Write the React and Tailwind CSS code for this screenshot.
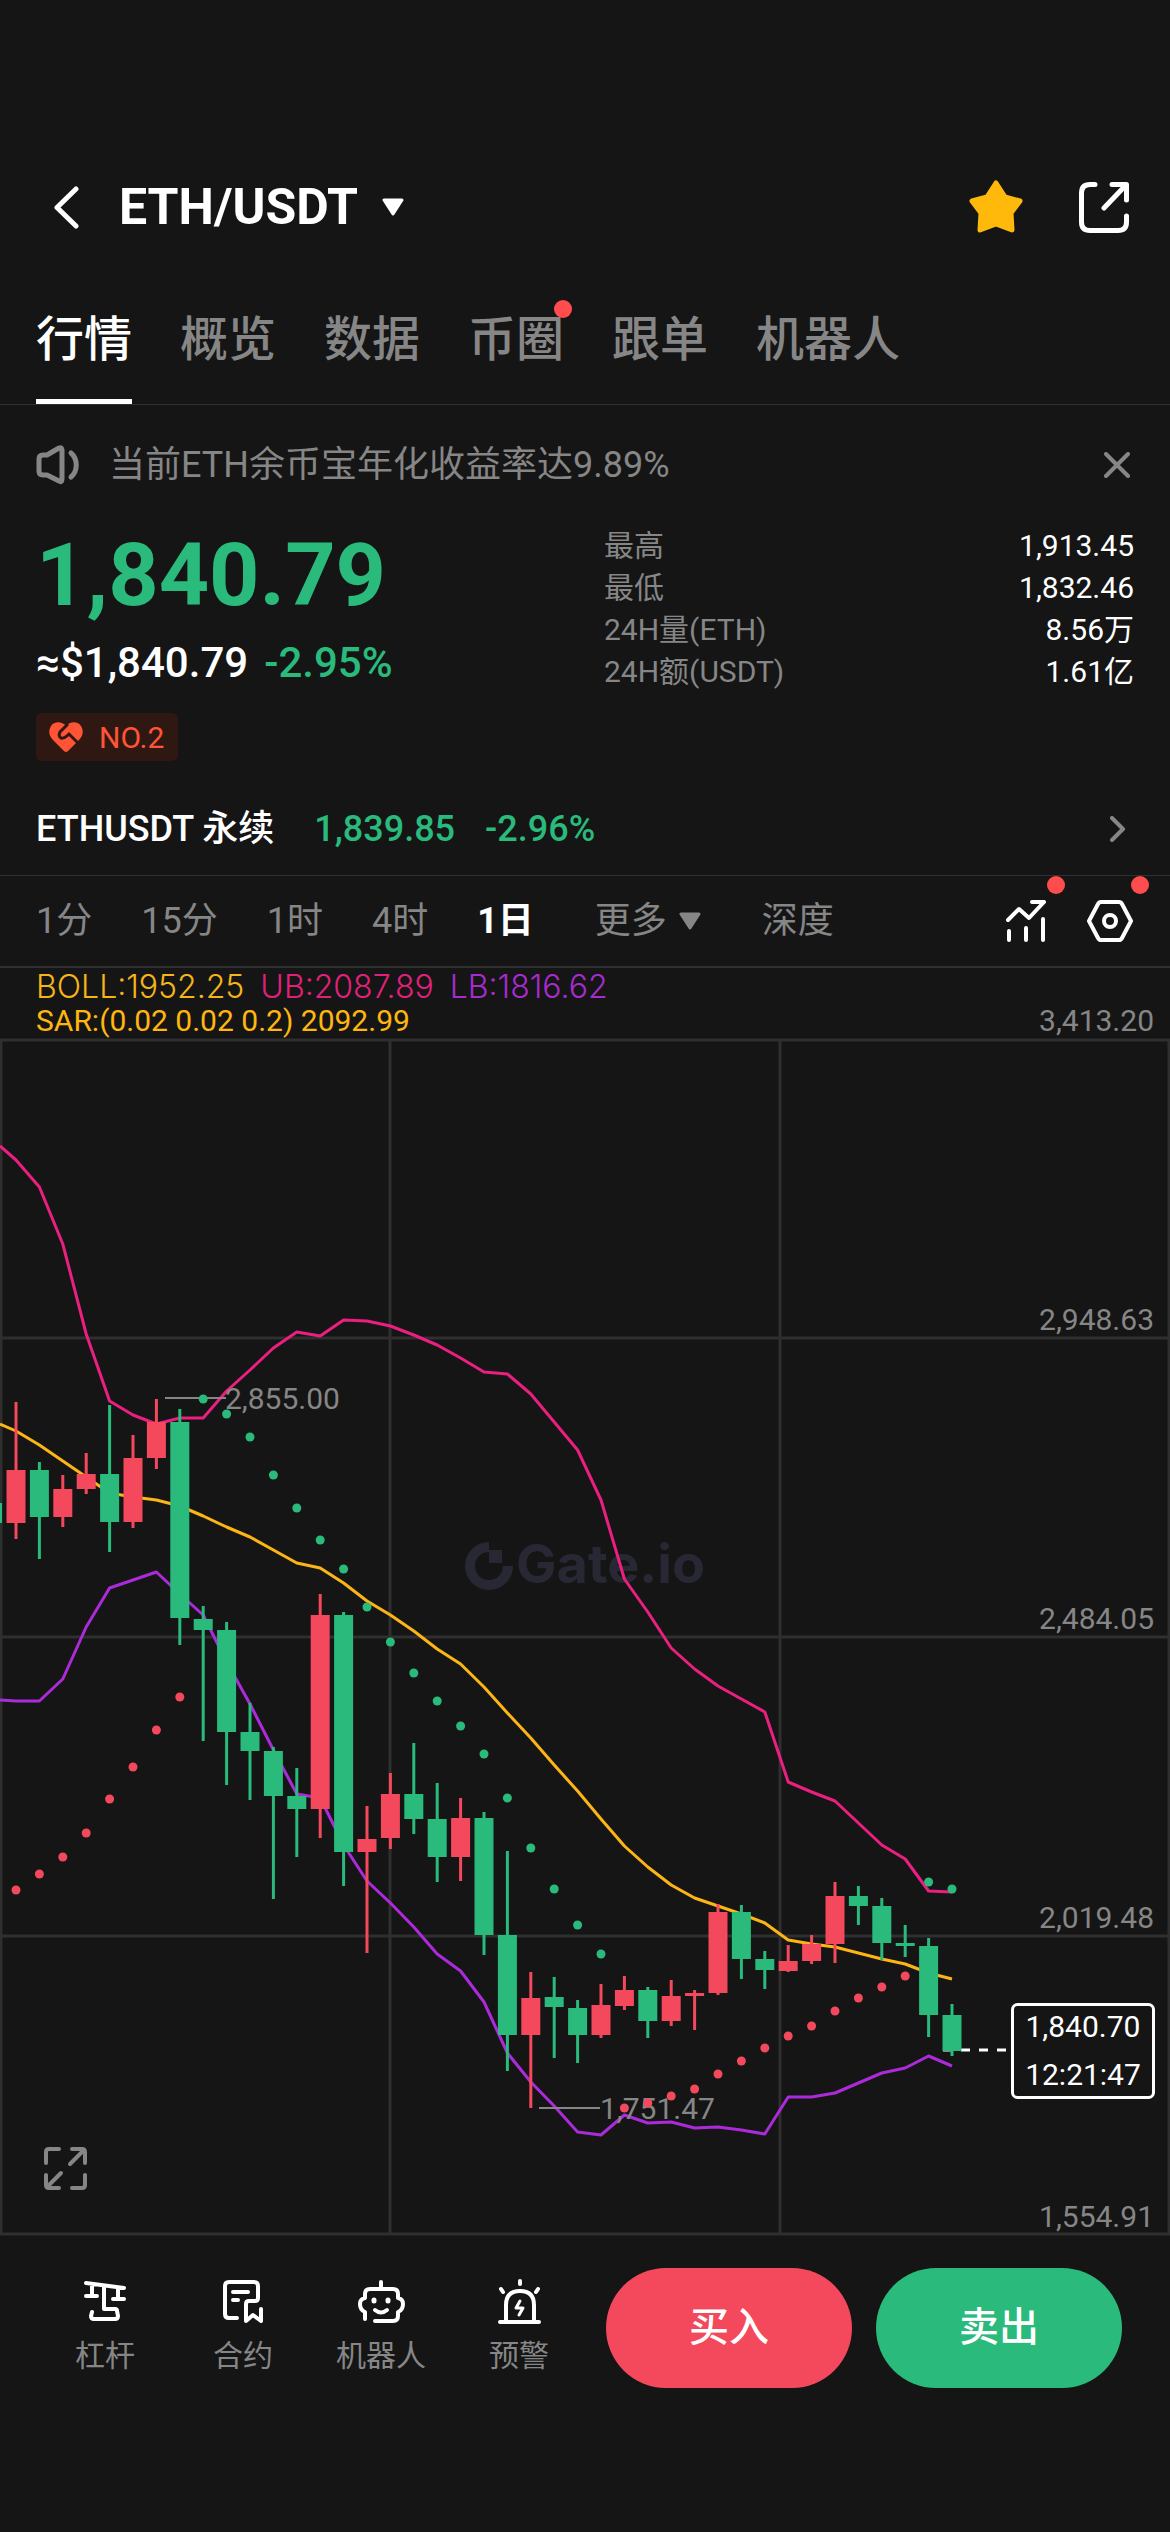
import clsx from 'clsx';

const tabs = [
  { label: '行情', active: true },
  { label: '概览' },
  { label: '数据' },
  { label: '币圈', dot: true },
  { label: '跟单' },
  { label: '机器人' },
];

const stats = [
  ['最高', '1,913.45'],
  ['最低', '1,832.46'],
  ['24H量(ETH)', '8.56万'],
  ['24H额(USDT)', '1.61亿'],
];

// --- Chart data, one entry per day, in chart units from the top grid line ---
// [color, high, body top, body bottom, low]
const UP = '#f4495d';
const DOWN = '#29ba7c';
const candles = [
  [UP, 362, 430, 483, 499],
  [DOWN, 422, 430, 477, 519],
  [UP, 435, 449, 477, 487],
  [UP, 413, 434, 449, 454],
  [DOWN, 365, 434, 482, 512],
  [UP, 395, 418, 482, 488],
  [UP, 359, 382, 418, 429],
  [DOWN, 369, 382, 578, 605],
  [DOWN, 566, 579, 590, 701],
  [DOWN, 582, 590, 692, 745],
  [DOWN, 663, 692, 711, 760],
  [DOWN, 707, 711, 756, 859],
  [DOWN, 728, 756, 769, 817],
  [UP, 554, 575, 769, 798],
  [DOWN, 572, 575, 812, 846],
  [UP, 766, 799, 812, 913],
  [UP, 733, 754, 798, 809],
  [DOWN, 703, 754, 779, 794],
  [DOWN, 743, 779, 817, 842],
  [UP, 758, 778, 817, 841],
  [DOWN, 772, 778, 895, 915],
  [DOWN, 811, 895, 995, 1031],
  [UP, 932, 958, 995, 1068],
  [DOWN, 937, 957, 967, 1018],
  [DOWN, 960, 968, 995, 1023],
  [UP, 944, 965, 995, 998],
  [UP, 936, 950, 966, 970],
  [DOWN, 947, 950, 981, 998],
  [UP, 940, 956, 981, 986],
  [UP, 950, 953, 956, 990],
  [UP, 864, 872, 953, 955],
  [DOWN, 865, 872, 919, 939],
  [DOWN, 911, 919, 930, 949],
  [UP, 905, 921, 931, 932],
  [UP, 895, 904, 921, 924],
  [UP, 842, 856, 904, 923],
  [DOWN, 846, 856, 866, 885],
  [DOWN, 858, 866, 903, 920],
  [DOWN, 885, 903, 906, 917],
  [DOWN, 898, 906, 975, 997],
  [DOWN, 964, 975, 1011, 1016],
];

// the first value of each band belongs to the left edge of the chart
const upper = [
  106, 120, 147, 204, 294, 361, 375, 384, 378, 378, 351, 330, 308, 292, 296, 280, 281, 286, 295, 305, 318,
  332, 334, 354, 382, 410, 460, 539, 572, 608, 629, 646, 659, 672, 742, 752, 761, 783, 805, 819, 851, 852,
];
const middle = [
  384, 391, 405, 421, 437, 453, 457, 460, 466, 476, 487, 497, 510, 523, 528, 543, 561, 575, 591, 609, 624,
  647, 673, 698, 725, 751, 779, 806, 827, 845, 858, 866, 874, 883, 900, 904, 907, 913, 919, 924, 933, 939,
];
const lower = [
  660, 661, 661, 639, 587, 548, 540, 532, 554, 575, 622, 664, 710, 754, 758, 805, 841, 863, 887, 914, 931,
  962, 1013, 1042, 1066, 1092, 1095, 1075, 1083, 1082, 1088, 1087, 1090, 1094, 1057, 1057, 1053, 1043, 1033, 1028, 1016, 1026,
];
const sar = [
  850, 834, 817, 793, 759, 727, 690, 657, 359, 374, 397, 435, 468, 500, 529, 567, 602, 633, 661, 686, 714,
  758, 808, 849, 885, 914, 1068, 1063, 1056, 1049, 1034, 1021, 1008, 996, 986, 971, 958, 947, 936, 842, 849,
];

const xAt = (i) => 16 + i * 23.4;
const sarColor = (i) => (i < 8 || (i > 25 && i < 39) ? UP : DOWN);
const toPoints = (band) => band.map((y, i) => `${i === 0 ? 0 : xAt(i - 1)},${y}`).join(' ');

function Icon({ w, h, children, stroke = 4, className }) {
  return (
    <svg
      width={w}
      height={h}
      viewBox={`0 0 ${w} ${h}`}
      fill="none"
      stroke="currentColor"
      strokeWidth={stroke}
      strokeLinecap="round"
      strokeLinejoin="round"
      className={clsx('shrink-0', className)}
      aria-hidden="true"
    >
      {children}
    </svg>
  );
}

function Triangle() {
  return (
    <Icon w={22} h={18} stroke={3}>
      <path d="M2 2H20L11 16Z" fill="currentColor" />
    </Icon>
  );
}

function Dot({ className }) {
  return <span className={clsx('absolute size-[18px] rounded-full bg-[#ff4d4f]', className)} />;
}

function Header() {
  return (
    <header className="flex h-[114px] items-center pr-[41px] pl-[54px]">
      <button aria-label="返回">
        <Icon w={25} h={43} stroke={5}>
          <path d="M22 3L3 21.5L22 40" />
        </Icon>
      </button>
      <button className="ml-10 flex items-center gap-6 text-[50px] leading-[60px] font-bold">
        ETH/USDT
        <Triangle />
      </button>
      <button aria-label="收藏" className="ml-auto text-[#ffb90b]">
        <Icon w={54} h={54} stroke={5}>
          <path
            d="M27 3L36 17L51 21L42 33L43 50L27 44L11 50L12 33L3 21L18 17Z"
            fill="currentColor"
          />
        </Icon>
      </button>
      <button aria-label="分享" className="ml-14">
        <Icon w={50} h={51} stroke={5}>
          <path d="M16 2.5H11Q2.5 2.5 2.5 11V40Q2.5 48.5 11 48.5H39Q47.5 48.5 47.5 40V34" />
          <path d="M33 2.5H47.5V18M47 3L25 26" />
        </Icon>
      </button>
    </header>
  );
}

function Tabs() {
  return (
    <nav className="flex gap-12 border-b border-[#303030] px-9">
      {tabs.map((tab) => (
        <button
          key={tab.label}
          className={clsx(
            'relative border-b-[5px] pt-[50px] pb-[33px] text-[48px] leading-[52px] font-medium',
            tab.active ? 'border-white text-white' : 'border-transparent text-[#868686]'
          )}
        >
          {tab.label}
          {tab.dot && <Dot className="top-9 -right-2" />}
        </button>
      ))}
    </nav>
  );
}

function Summary() {
  return (
    <section className="px-9">
      <div className="flex h-[120px] items-center text-[#868686]">
        <Icon w={43} h={40} stroke={5}>
          <path d="M7 10H11L23 3Q26 2 26 5V34Q26 38 23 36L11 30H7Q3 30 3 26V14Q3 10 7 10Z" />
          <path d="M35 8C42 14 42 26 35 32" />
        </Icon>
        <p className="ml-[30px] text-[36px] leading-[48px]">当前ETH余币宝年化收益率达9.89%</p>
        <button aria-label="关闭" className="ml-auto pr-1">
          <Icon w={26} h={26} stroke={4}>
            <path d="M2 2L24 24M24 2L2 24" />
          </Icon>
        </button>
      </div>

      <div className="flex">
        <div className="flex-1">
          <div className="text-[88px] leading-[100px] font-bold text-[#29ba7c]">1,840.79</div>
          <div className="mt-2 flex gap-4 text-[42px] leading-[60px] font-medium">
            <span>≈$1,840.79</span>
            <span className="text-[#29ba7c]">-2.95%</span>
          </div>
        </div>
        <dl className="w-[530px] text-[30px] leading-[42px]">
          {stats.map(([label, value]) => (
            <div key={label} className="flex justify-between">
              <dt className="text-[#868686]">{label}</dt>
              <dd>{value}</dd>
            </div>
          ))}
        </dl>
      </div>

      <a
        href="#rank"
        className="mt-5 inline-flex h-12 items-center gap-4 rounded-md bg-[#301812] pr-[14px] pl-[13px] text-[30px] text-[#ff5436]"
      >
        <svg width="34" height="30" viewBox="0 0 34 30" className="shrink-0" aria-hidden="true">
          <path
            d="M17 4C13-1 5-1 2 4C-1 9 0 14 4 18L15 29Q17 31 19 29L30 18C34 14 35 9 32 4C29-1 21-1 17 4Z"
            fill="#ff5436"
          />
          <path d="M19 2L11 10Q9 14 12 16Q15 17 20 12L29 21" fill="none" stroke="#301812" strokeWidth="3" />
        </svg>
        NO.2
      </a>

      <a href="#perp" className="mt-[22px] flex h-[92px] items-center text-[36px] leading-[48px] font-medium">
        ETHUSDT 永续
        <span className="ml-10 text-[#29ba7c]">1,839.85</span>
        <span className="ml-[30px] text-[#29ba7c]">-2.96%</span>
        <Icon w={16} h={26} stroke={4} className="mr-2 ml-auto text-[#868686]">
          <path d="M2 2L13 13L2 24" />
        </Icon>
      </a>
    </section>
  );
}

function Intervals() {
  return (
    <div className="flex h-[93px] items-center gap-[49px] border-t border-b-2 border-[#303030] pr-[37px] pl-9 text-[36px] leading-[48px] text-[#868686]">
      <button>1分</button>
      <button>15分</button>
      <button>1时</button>
      <button>4时</button>
      <button className="font-bold text-white">1日</button>
      <button className="mx-3 flex items-center gap-3">
        更多
        <Triangle />
      </button>
      <button>深度</button>
      <div className="ml-auto flex gap-10 text-white">
        <button aria-label="指标" className="relative">
          <Icon w={41} h={42}>
            <path d="M2 20L13 9L23 18L38 2M26 2H38" />
            <path d="M3 31V40M20 28V40M37 19V40" />
          </Icon>
          <Dot className="-top-6 -right-[18px]" />
        </button>
        <button aria-label="设置" className="relative">
          <Icon w={46} h={42}>
            <path d="M2 21L11 4Q12 2 14 2H32Q34 2 35 4L44 21L35 38Q34 40 32 40H14Q12 40 11 38Z" />
            <circle cx="23" cy="21" r="6" />
          </Icon>
          <Dot className="-top-6 -right-4" />
        </button>
      </div>
    </div>
  );
}

function Chart() {
  return (
    <section className="relative">
      <div className="pt-[2px] pr-4 pl-9 text-[30px] leading-[34px]">
        <div className="flex gap-4 text-[32px] leading-[34px] font-light [font-family:Inter,sans-serif]">
          <span className="text-[#f5b517]">BOLL:1952.25</span>
          <span className="text-[#e0207c]">UB:2087.89</span>
          <span className="text-[#a72bd0]">LB:1816.62</span>
        </div>
        <div className="flex justify-between">
          <span className="text-[#ffb60f]">SAR:(0.02 0.02 0.2) 2092.99</span>
          <span className="text-[#868686]">3,413.20</span>
        </div>
      </div>

      <svg viewBox="0 -2 1170 1198" className="block h-auto w-full" role="img" aria-label="ETH/USDT K线">
        {/* grid */}
        <g stroke="#2f2f2f" strokeWidth="3" fill="none">
          <path d="M0 0H1170M0 298H1170M0 597H1170M0 896H1170M0 1194H1170" />
          <path d="M1 0V1194M390 0V1194M780 0V1194M1169 0V1194" />
        </g>

        {/* watermark */}
        <g fill="#272833">
          <path d="M489 507A19 19 0 1 0 508 526" fill="none" stroke="#272833" strokeWidth="10" />
          <path d="M489 510H502V523H489Z" />
          <text x="516" y="543" className="text-[54px] font-bold [font-family:Inter,sans-serif]">Gate.io</text>
        </g>

        {/* bollinger bands */}
        <g fill="none" strokeWidth="3" strokeLinejoin="round">
          <polyline points={toPoints(upper)} stroke="#ea1f80" />
          <polyline points={toPoints(middle)} stroke="#fdb515" />
          <polyline points={toPoints(lower)} stroke="#ab2bdb" />
        </g>

        {/* last price line */}
        <path d="M943 1010H1006" stroke="#fff" strokeWidth="3" strokeDasharray="9 9" />

        {/* candles */}
        <rect x="0" y="463" width="2" height="20" fill={DOWN} />
        {candles.map(([color, high, top, bottom, low], i) => (
          <g key={i} fill={color}>
            <rect x={xAt(i) - 1.5} y={high} width="3" height={low - high} />
            <rect x={xAt(i) - 9.5} y={top} width="19" height={bottom - top} />
          </g>
        ))}

        {/* high and low marks */}
        <path d="M165 358H226M539 1068H600" stroke="#868686" strokeWidth="2" />
        <g fill="#868686" className="text-[30px]">
          <text x="225" y="369">2,855.00</text>
          <text x="600" y="1079">1,751.47</text>
        </g>

        {/* SAR */}
        {sar.map((y, i) => (
          <circle key={i} cx={xAt(i)} cy={y} r="4.5" fill={sarColor(i)} />
        ))}

        {/* price axis */}
        <g fill="#868686" textAnchor="end" className="text-[30px]">
          <text x="1154" y="290">2,948.63</text>
          <text x="1154" y="589">2,484.05</text>
          <text x="1154" y="888">2,019.48</text>
          <text x="1154" y="1187">1,554.91</text>
        </g>
        <rect x="1012.5" y="964.5" width="141" height="93" rx="5" fill="#151515" stroke="#fff" strokeWidth="3" />
        <g fill="#fff" textAnchor="middle" className="text-[30px]">
          <text x="1083" y="997">1,840.70</text>
          <text x="1083" y="1045">12:21:47</text>
        </g>
      </svg>

      <button aria-label="全屏" className="absolute bottom-[46px] left-11 text-[#868686]">
        <Icon w={43} h={43}>
          <path d="M2 16V5Q2 2 5 2H15M28 2H38Q41 2 41 5V16M39 4L26 17" />
          <path d="M41 28V38Q41 41 38 41H28M2 28V38Q2 41 5 41H15M4 39L17 26" />
        </Icon>
      </button>
    </section>
  );
}

const actions = [
  {
    label: '杠杆',
    icon: (
      <Icon w={42} h={46}>
        <path d="M2 4L40 9M8 6V17M2 17H13M34 9V20M29 20H40" />
        <path d="M20 7V30H31Q33 30 33 32L34 37Q34 40 31 40H10Q7 40 7 37L8 33" />
      </Icon>
    ),
  },
  {
    label: '合约',
    icon: (
      <Icon w={40} h={46}>
        <path d="M14 39H6Q2 39 2 35V7Q2 3 6 3H31Q35 3 35 7V19Q35 22 32 22H26Q23 22 23 25V42L30 36L38 42V30" />
        <path d="M10 13H25M10 21H15" />
      </Icon>
    ),
  },
  {
    label: '机器人',
    icon: (
      <Icon w={47} h={46}>
        <path d="M23 3V9M7 40V33Q2 31 2 25Q2 20 7 19V15Q7 10 12 10H35Q40 10 40 15V19Q45 20 45 25Q45 31 40 33V37Q40 42 35 42H17" />
        <path d="M17 31Q23 36 29 31" />
        <path d="M16 21V22M30 21V22" strokeWidth="5" />
      </Icon>
    ),
  },
  {
    label: '预警',
    icon: (
      <Icon w={43} h={46}>
        <path d="M2 43H41M8 43V26Q8 12 22 12Q36 12 36 26V43M22 2V5M3 10L5 13M40 10L38 13" />
        <path d="M22 22L18 29H25L21 36" strokeWidth="3" />
      </Icon>
    ),
  },
];

function BottomBar() {
  return (
    <footer className="flex gap-6 pt-8 pr-12 pb-36 pl-9">
      <div className="-mr-[6px] grid flex-1 grid-cols-4">
        {actions.map(({ label, icon }) => (
          <button key={label} className="flex flex-col items-center pt-[11px] text-[30px] leading-[42px] text-[#868686]">
            <span className="text-white">{icon}</span>
            <span className="mt-[10px]">{label}</span>
          </button>
        ))}
      </div>
      <button className="h-[120px] w-[246px] rounded-full bg-[#f4495d] text-[40px] font-medium">买入</button>
      <button className="h-[120px] w-[246px] rounded-full bg-[#29ba7c] text-[40px] font-medium">卖出</button>
    </footer>
  );
}

export default function App() {
  return (
    <div className="min-h-screen bg-[#151515] pt-[150px] text-white [font-family:Roboto,'Noto_Sans_CJK_SC',sans-serif]">
      <Header />
      <Tabs />
      <Summary />
      <Intervals />
      <Chart />
      <BottomBar />
    </div>
  );
}
